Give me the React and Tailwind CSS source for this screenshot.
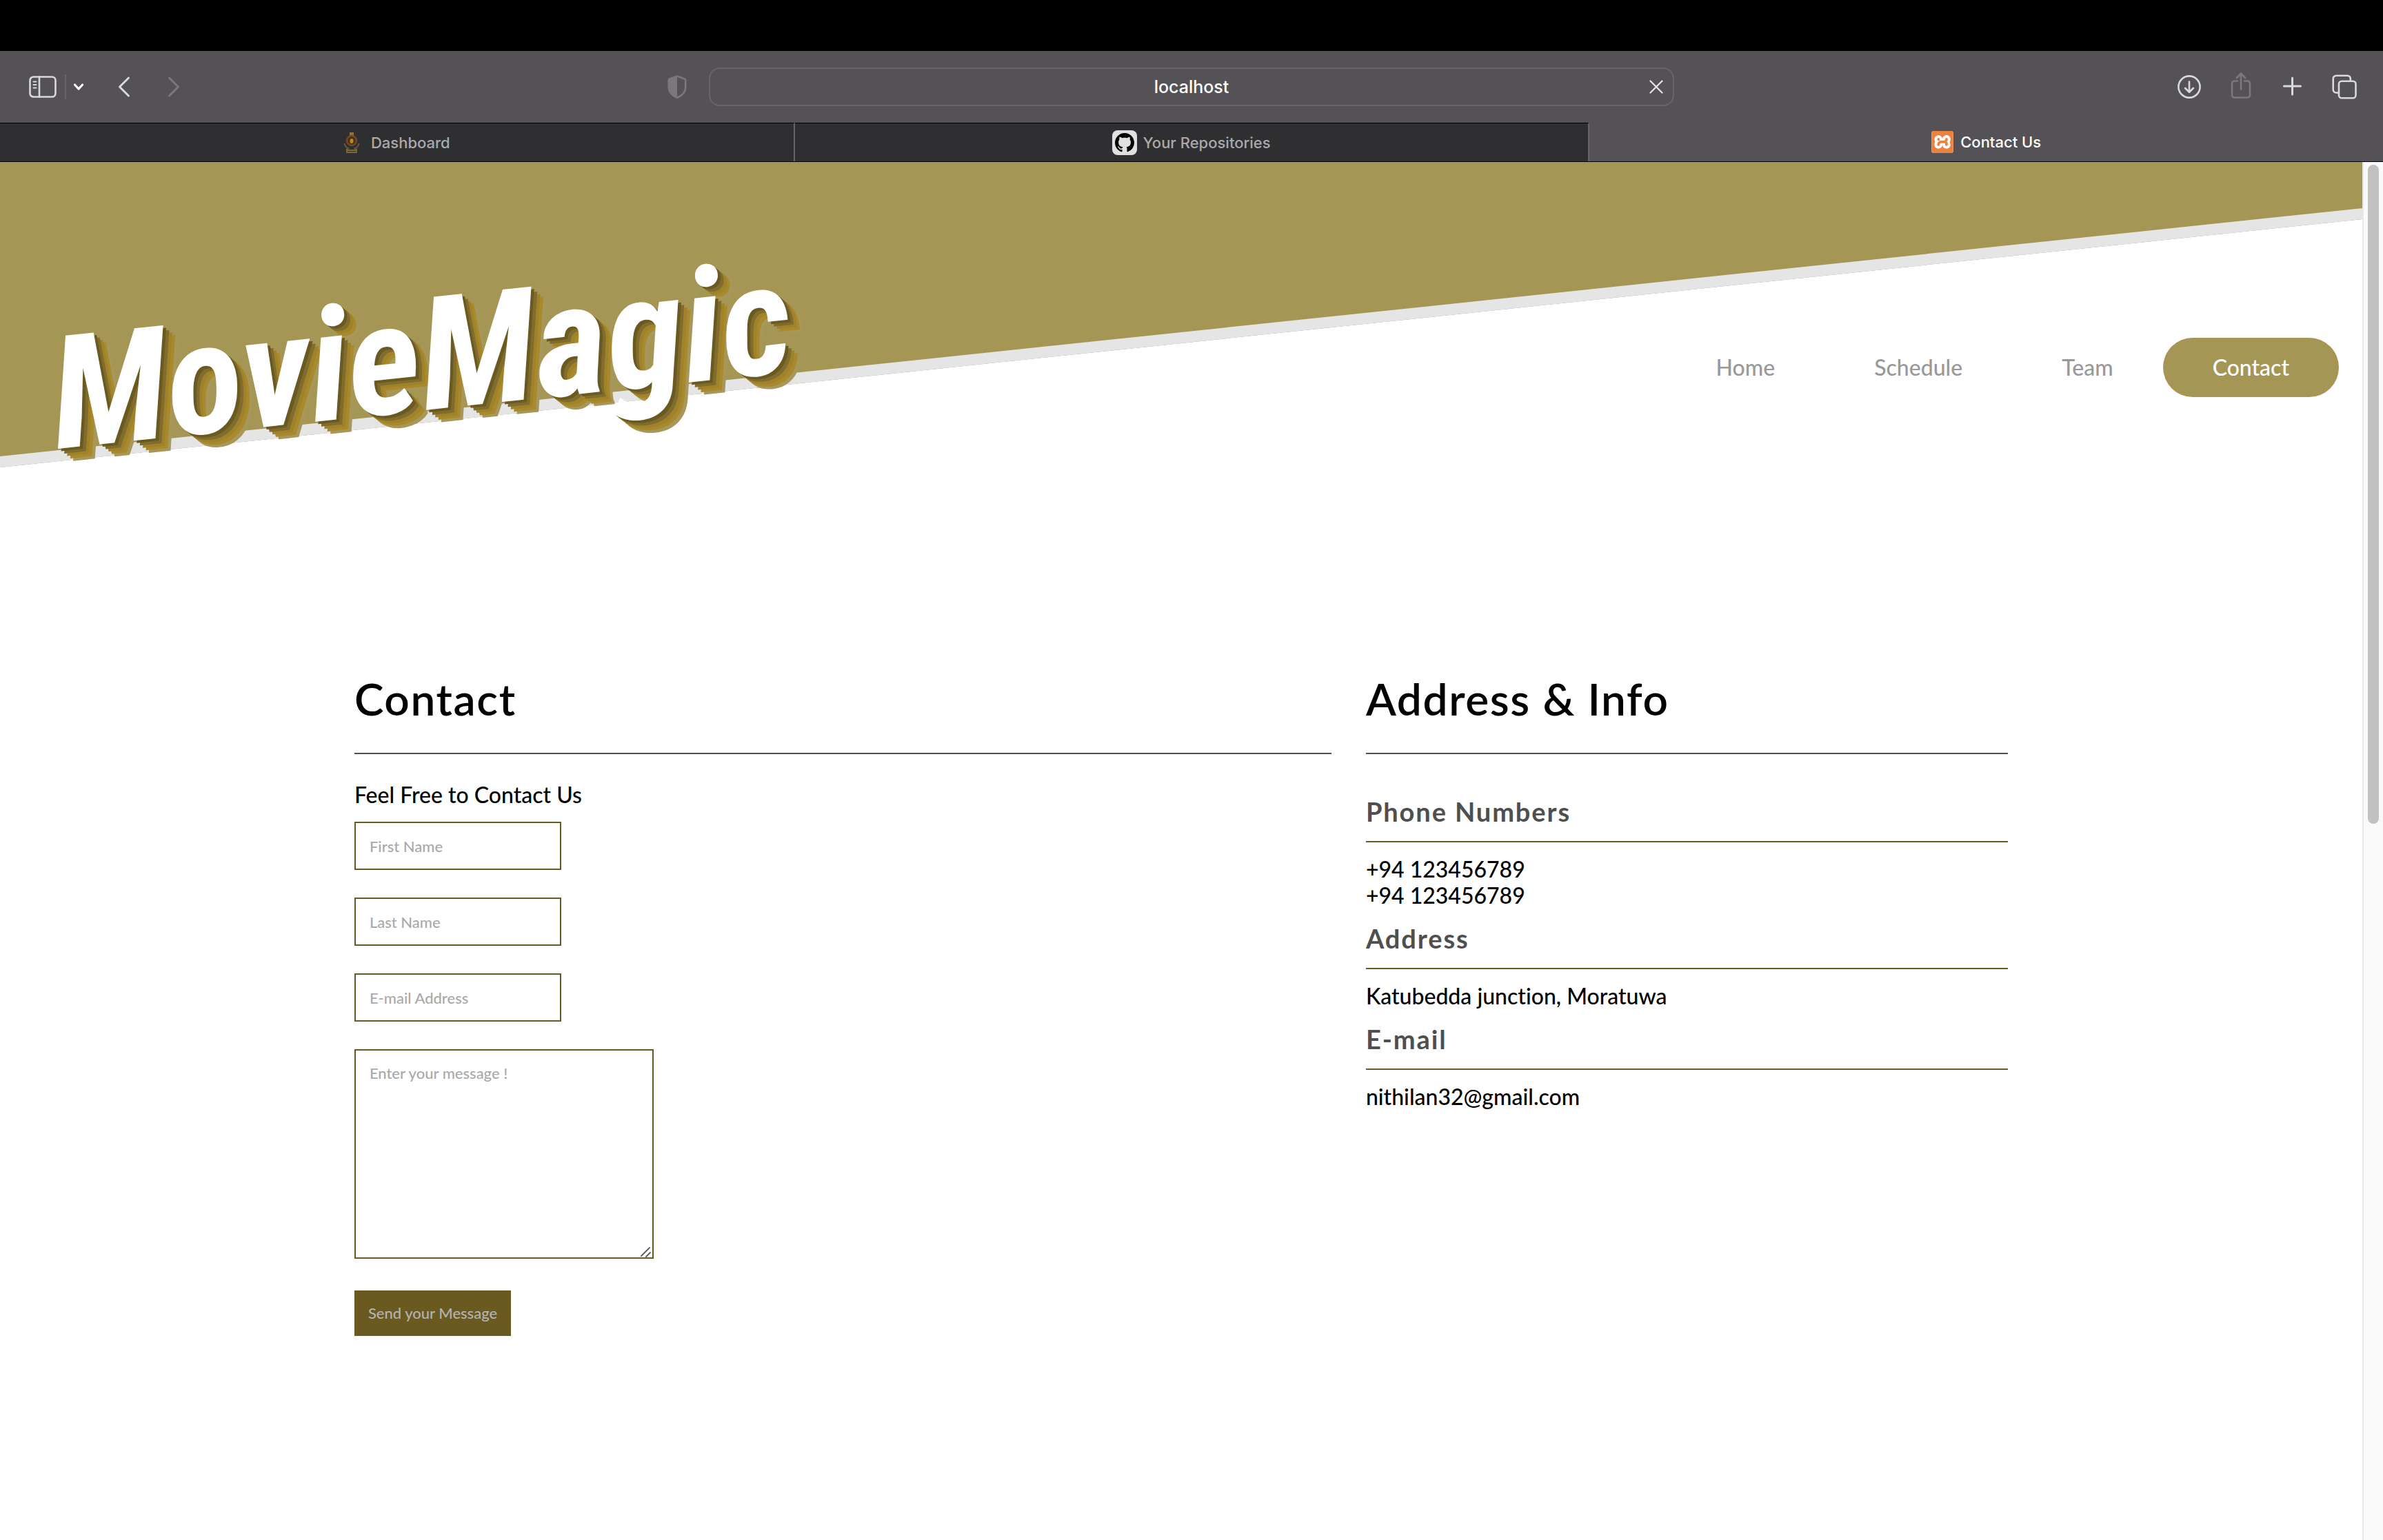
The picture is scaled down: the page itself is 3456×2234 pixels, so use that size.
import { SiXampp } from "react-icons/si";

const stroke = {
  fill: "none",
  stroke: "currentColor",
  strokeLinecap: "round",
  strokeLinejoin: "round",
};

function SidebarIcon() {
  return (
    <svg className="h-8 w-10" viewBox="0 0 40 32" {...stroke} strokeWidth="2.6">
      <rect x="1.5" y="1.5" width="37" height="29" rx="5" />
      <path d="M15 1.5v29" />
      <path d="M6.5 8.5h4M6.5 13h4M6.5 17.5h4" strokeWidth="2" />
    </svg>
  );
}

function ChevronDown() {
  return (
    <svg className="h-4 w-4" viewBox="0 0 16 16" {...stroke} strokeWidth="3.2">
      <path d="M2.5 5l5.5 6 5.5-6" />
    </svg>
  );
}

function ChevronLeft() {
  return (
    <svg className="h-8 w-5" viewBox="0 0 20 32" {...stroke} strokeWidth="3">
      <path d="M16.5 3l-13 13 13 13" />
    </svg>
  );
}

function ChevronRight() {
  return (
    <svg className="h-8 w-5" viewBox="0 0 20 32" {...stroke} strokeWidth="3">
      <path d="M3.5 3l13 13-13 13" />
    </svg>
  );
}

function ShieldIcon() {
  return (
    <svg className="h-9 w-7" viewBox="0 0 28 36" {...stroke} strokeWidth="2.6">
      <path d="M14 2.5L25 6.5c.8.3 1.2 1 1.2 2V19c0 7-5 11.5-12.2 14.8C6.8 30.5 1.8 26 1.8 19V8.5c0-1 .4-1.7 1.2-2z" />
      <path d="M14 2.5v31.3C6.8 30.5 1.8 26 1.8 19V8.5c0-1 .4-1.7 1.2-2z" fill="currentColor" stroke="none" />
    </svg>
  );
}

function CloseIcon() {
  return (
    <svg className="h-5 w-5" viewBox="0 0 20 20" {...stroke} strokeWidth="2.2">
      <path d="M1.5 1.5l17 17M18.5 1.5l-17 17" />
    </svg>
  );
}

function DownloadIcon() {
  return (
    <svg className="h-9 w-9" viewBox="0 0 36 36" {...stroke} strokeWidth="2.6">
      <circle cx="18" cy="18" r="15.6" />
      <path d="M18 10.5v15M12 19.8l6 5.9 6-5.9" />
    </svg>
  );
}

function ShareIcon() {
  return (
    <svg className="h-10 w-9" viewBox="0 0 36 40" {...stroke} strokeWidth="2.6">
      <path d="M13 13.5H8.5A3.5 3.5 0 0 0 5 17v17a3.5 3.5 0 0 0 3.5 3.5h19A3.5 3.5 0 0 0 31 34V17a3.5 3.5 0 0 0-3.5-3.5H23" />
      <path d="M18 25.5V3M11.8 9L18 2.5 24.2 9" />
    </svg>
  );
}

function PlusIcon() {
  return (
    <svg className="h-9 w-9" viewBox="0 0 36 36" {...stroke} strokeWidth="3">
      <path d="M17.5 5v24M5.500 17h24" />
    </svg>
  );
}

function TabsIcon() {
  return (
    <svg className="h-9 w-9" viewBox="0 0 36 36" {...stroke} strokeWidth="2.6">
      <path d="M10 26.5H6A4.300 4.300 0 0 1 1.700 22V6A4.300 4.300 0 0 1 6 1.700h16.500A4.300 4.300 0 0 1 26.800 6v3.500" />
      <rect x="10" y="9.7" width="24.500" height="24.500" rx="4" />
    </svg>
  );
}

function EmblemIcon() {
  return (
    <svg className="h-8 w-6" viewBox="0 0 24 32" fill="none">
      <rect x="9" y="1" width="6" height="5" fill="#8f7434" />
      <circle cx="12" cy="13" r="7" fill="#4a2f1c" stroke="#74492b" strokeWidth="2.5" />
      <ellipse cx="12" cy="13.5" rx="2.5" ry="3.5" fill="#b98a22" />
      <path d="M1.500 17c.5 4 3.500 6.500 7 7.500M22.500 17c-.5 4-3.500 6.500-7 7.500" stroke="#6a5c44" strokeWidth="2" />
      <path d="M5 25.5l2.500 1.500h9l2.500-1.500v4.500H5z" stroke="#7d6a36" strokeWidth="1.8" />
    </svg>
  );
}

function GithubIcon() {
  return (
    <span className="flex size-9 items-center justify-center rounded-lg bg-[#e0e0e0]">
      <svg className="size-7" viewBox="0 0 16 16" fill="#000">
        <path d="M8 0C3.58 0 0 3.58 0 8c0 3.54 2.29 6.53 5.47 7.59.4.07.55-.17.55-.38 0-.19-.01-.82-.01-1.49-2.01.37-2.53-.49-2.69-.94-.09-.23-.48-.94-.82-1.13-.28-.15-.68-.52-.01-.53.63-.01 1.08.58 1.23.82.72 1.21 1.87.87 2.33.66.07-.52.28-.87.51-1.07-1.78-.2-3.64-.89-3.64-3.95 0-.87.31-1.59.82-2.15-.08-.2-.36-1.02.08-2.12 0 0 .67-.21 2.2.82.64-.18 1.32-.27 2-.27.68 0 1.36.09 2 .27 1.53-1.04 2.2-.82 2.2-.82.44 1.1.16 1.92.08 2.12.51.56.82 1.27.82 2.15 0 3.07-1.87 3.75-3.65 3.95.29.25.54.73.54 1.48 0 1.07-.01 1.93-.01 2.2 0 .21.15.46.55.38A8.013 8.013 0 0 0 16 8c0-4.42-3.58-8-8-8z" />
      </svg>
    </span>
  );
}

function Toolbar() {
  return (
    <div className="grid h-[104px] grid-cols-[1fr_40.5%_1fr] items-center bg-[#555257] text-[#d9d8da]">
      <div className="flex items-center pr-8 pl-[42px]">
        <button aria-label="Show sidebar"><SidebarIcon /></button>
        <span className="ml-3 h-9 w-0.5 bg-[#68656a]" />
        <button aria-label="Tab groups" className="ml-2.5 text-white"><ChevronDown /></button>
        <button aria-label="Back" className="ml-12"><ChevronLeft /></button>
        <button aria-label="Forward" className="ml-[52px] text-[#7b787d]"><ChevronRight /></button>
        <button aria-label="Privacy report" className="ml-auto text-[#7b787d]"><ShieldIcon /></button>
      </div>
      <div className="flex h-14 items-center rounded-2xl border-2 border-[#68656a] pl-12 text-white">
        <input
          aria-label="Address"
          defaultValue="localhost"
          className="min-w-0 flex-1 bg-transparent text-center font-['Inter',sans-serif] text-[25px] font-medium outline-none"
        />
        <button aria-label="Stop loading" className="flex w-12 justify-center text-[#e6e5e7]"><CloseIcon /></button>
      </div>
      <div className="flex items-center justify-end gap-[39px] pr-[38px]">
        <button aria-label="Downloads"><DownloadIcon /></button>
        <button aria-label="Share" className="pb-1 text-[#7b787d]"><ShareIcon /></button>
        <button aria-label="New tab"><PlusIcon /></button>
        <button aria-label="Show all tabs"><TabsIcon /></button>
      </div>
    </div>
  );
}

const tabBase =
  "flex flex-1 items-center justify-center font-['Inter',sans-serif] text-[22px]";

function TabBar() {
  return (
    <div className="flex h-[57px] border-b border-black bg-[#555257]">
      <button className={`${tabBase} gap-4 border-t border-r-2 border-t-black border-r-[#68656a] bg-[#2f2f31] text-[#a9a9ab]`}>
        <EmblemIcon />
        Dashboard
      </button>
      <button className={`${tabBase} gap-2 border-t border-r-2 border-t-black border-r-[#68656a] bg-[#2f2f31] text-[#a9a9ab]`}>
        <GithubIcon />
        Your Repositories
      </button>
      <button className={`${tabBase} gap-2.5 font-medium text-white`}>
        <span className="rounded bg-white">
          <SiXampp className="size-8 text-[#ea8240]" />
        </span>
        Contact Us
      </button>
    </div>
  );
}

const navLinks = ["Home", "Schedule", "Team"];

function Header() {
  return (
    <header className="relative">
      <div className="absolute inset-0 overflow-hidden">
        <div className="h-[443px] origin-top-left -skew-y-6 border-b-16 border-[#e5e5e5] bg-[#a69656]" />
      </div>
      <div className="relative flex items-center justify-between pt-[168px] pr-[34px] pb-6 pl-18">
        <div className="mb-8 -rotate-6 font-['Roboto_Condensed','Roboto',sans-serif] text-[228px] leading-none font-bold text-white italic [text-shadow:4px_4px_#6b5a20,8px_8px_#806c2e,12px_12px_#a08229,16px_16px_#a8892d,20px_20px_#a8975a]">
          MovieMagic
        </div>
        <nav className="flex items-center text-[32px] leading-[38px] font-medium text-[#999]">
          {navLinks.map((name) => (
            <a key={name} href="#" className="px-[72px] py-6">{name}</a>
          ))}
          <a href="#" className="rounded-full bg-[#a69656] px-[72px] py-6 text-white">Contact</a>
        </nav>
      </div>
    </header>
  );
}

const sectionTitle =
  "border-b-2 border-[#4f4f4f] pb-10 text-[64px] leading-[77px] font-semibold tracking-wide";
const field =
  "border-2 border-[#6b5a20] bg-white px-5 text-[22px] leading-[26px] font-medium placeholder:text-[#a9a9a9]";

function ContactForm() {
  return (
    <section>
      <h1 className={sectionTitle}>Contact</h1>
      <p className="mt-10">Feel Free to Contact Us</p>
      <form className="mt-5 flex flex-col items-start gap-10">
        <input aria-label="First Name" placeholder="First Name" className={`${field} h-[70px] w-[300px]`} />
        <input aria-label="Last Name" placeholder="Last Name" className={`${field} h-[70px] w-[300px]`} />
        <input aria-label="E-mail Address" type="email" placeholder="E-mail Address" className={`${field} h-[70px] w-[300px]`} />
        <div className="relative flex">
          <textarea aria-label="Message" placeholder="Enter your message !" className={`${field} h-[304px] w-[434px] resize-none py-5`} />
          <svg className="pointer-events-none absolute right-1 bottom-0.5 size-4 text-[#5c5c5c]" viewBox="0 0 16 16" {...stroke} strokeWidth="1.8">
            <path d="M2 14L14 2M9 15l6-6" />
          </svg>
        </div>
        <button type="button" className="mt-1.5 bg-[#6b5a20] px-5 py-5 text-[22px] leading-[26px] font-medium text-[#b3b3b3]">
          Send your Message
        </button>
      </form>
    </section>
  );
}

const info = [
  { title: "Phone Numbers", lines: ["+94 123456789", "+94 123456789"] },
  { title: "Address", lines: ["Katubedda junction, Moratuwa"] },
  { title: "E-mail", lines: ["nithilan32@gmail.com"] },
];

function AddressInfo() {
  return (
    <section>
      <h1 className={sectionTitle}>Address &amp; Info</h1>
      <div className="pt-10">
        {info.map(({ title, lines }) => (
          <div key={title} className="pt-5">
            <h2 className="border-b-2 border-[#6b5a20] pb-5 text-[38px] leading-[46px] font-bold tracking-wider text-[#4f4f4f]">
              {title}
            </h2>
            <div className="pt-5">
              {lines.map((line, i) => (
                <p key={i}>{line}</p>
              ))}
            </div>
          </div>
        ))}
      </div>
    </section>
  );
}

export default function App() {
  return (
    <div className="flex min-h-screen flex-col bg-white font-['Lato',sans-serif] text-[32px] leading-[38px] font-medium text-black [font-variant-ligatures:none]">
      <div className="h-[74px] bg-black" />
      <Toolbar />
      <TabBar />
      <div className="flex flex-1">
        <div className="min-w-0 flex-1">
          <Header />
          <main className="mx-auto grid w-[70%] grid-cols-[35fr_23fr] gap-[50px] pt-72">
            <ContactForm />
            <AddressInfo />
          </main>
        </div>
        <div className="w-[30px] border-l-2 border-[#e8e8e8] bg-[#fafafa] py-1">
          <div className="mx-auto h-[956px] w-4 rounded-full bg-[#c1c1c1]" />
        </div>
      </div>
    </div>
  );
}
